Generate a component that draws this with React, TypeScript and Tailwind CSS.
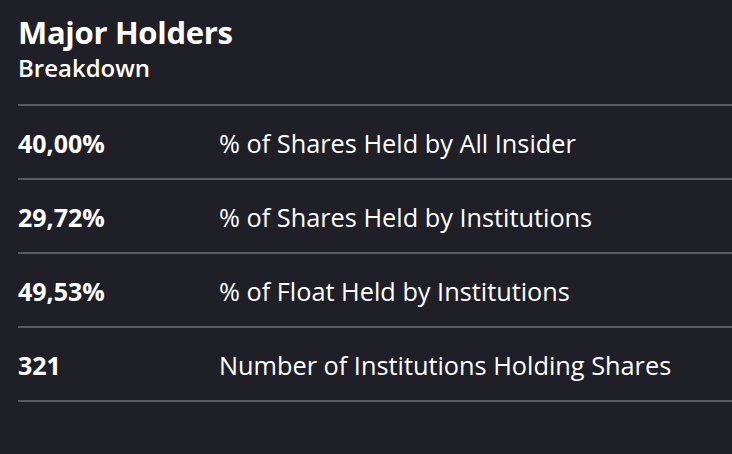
import React from "react";

const rows = [
  ["40,00%", "% of Shares Held by All Insider"],
  ["29,72%", "% of Shares Held by Institutions"],
  ["49,53%", "% of Float Held by Institutions"],
  ["321", "Number of Institutions Holding Shares"],
];

export default function App() {
  return (
    <div
      className="w-[732px] h-[454px] bg-[#1f2027] text-white pl-[18px] overflow-hidden"
      style={{ fontFamily: '"Open Sans", "Noto Sans", sans-serif' }}
    >
      <div className="h-[104px] pt-[12px]">
        <div className="text-[31px] font-bold leading-[40px] tracking-[-0.3px]">Major Holders</div>
        <div className="text-[24px] font-semibold leading-[32px]">Breakdown</div>
      </div>
      <div className="border-b-2 border-[#5a5b60]">
        {rows.map(([v, l]) => (
          <div key={v} className="h-[74px] border-t-2 border-[#5a5b60] flex items-center pt-[3px]">
            <div className="w-[201px] text-[25px] font-bold">{v}</div>
            <div className="text-[25.3px]">{l}</div>
          </div>
        ))}
      </div>
    </div>
  );
}
